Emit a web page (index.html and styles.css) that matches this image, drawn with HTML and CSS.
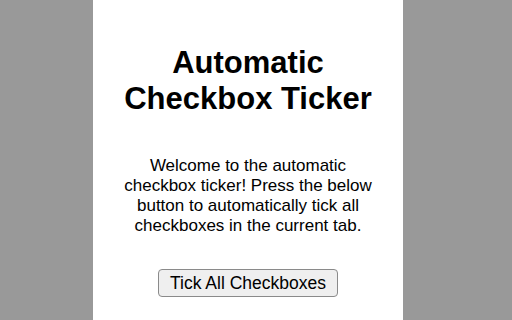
FILE: index.html
```html
<!DOCTYPE html>
<html>
<head>
<meta charset="utf-8">
<link rel="stylesheet" href="styles.css">
</head>
<body>
<div class="stage">
  <main class="popup">
    <h1 class="title">Automatic Checkbox Ticker</h1>
    <p class="intro">Welcome to the automatic checkbox ticker! Press the below button to automatically tick all checkboxes in the current tab.</p>
    <button class="tick-btn" type="button">Tick All Checkboxes</button>
  </main>
</div>
</body>
</html>
```

FILE: styles.css
```css
html, body {
  margin: 0;
  padding: 0;
  height: 100%;
}

body {
  background: #999999;
  font-family: "Liberation Sans", Arial, Helvetica, sans-serif;
  color: #000;
  overflow: hidden;
}

.stage {
  display: flex;
  padding-left: 93px;
  height: 320px;
}

.popup {
  width: 310px;
  height: 320px;
  box-sizing: border-box;
  background: #ffffff;
  padding: 45px 24px 0;
  display: flex;
  flex-direction: column;
  align-items: center;
  text-align: center;
}

.title {
  margin: 0;
  font-size: 31px;
  font-weight: 700;
  line-height: normal;
  width: 280px;
}

.intro {
  margin: 39px 0 0;
  font-size: 17px;
  line-height: normal;
}

.tick-btn {
  margin-top: 33px;
  width: 180px;
  height: 28px;
  box-sizing: border-box;
  padding: 0 8px;
  font-family: "Liberation Sans", Arial, Helvetica, sans-serif;
  font-size: 17.5px;
  line-height: normal;
  color: #000;
  background: #efefef;
  border: 1px solid #8a8a8a;
  border-radius: 4px;
}
```
